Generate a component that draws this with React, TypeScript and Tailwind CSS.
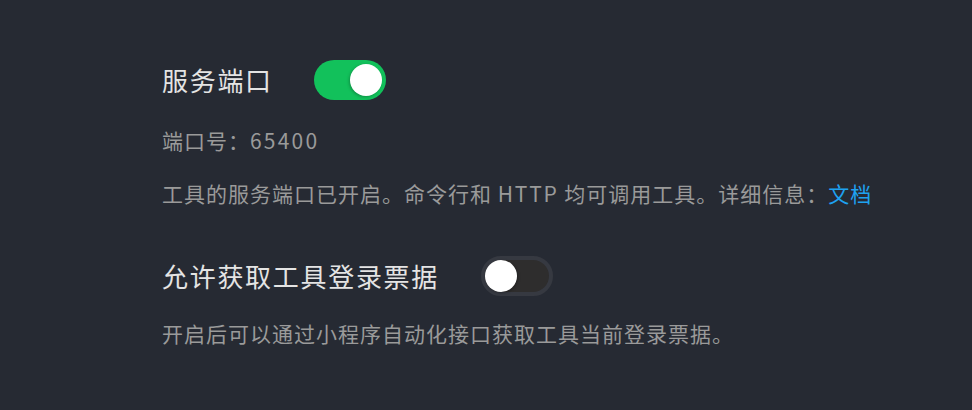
import React from "react";

function Toggle({ on }: { on: boolean }) {
  return on ? (
    <div className="relative ml-[41px] h-[40px] w-[72px] shrink-0 rounded-full bg-[#12c15b]">
      <div className="absolute right-[4px] top-[4px] h-[32px] w-[32px] rounded-full bg-white shadow-[-1px_1px_3px_rgba(0,0,0,0.25)]" />
    </div>
  ) : (
    <div className="relative ml-[42px] h-[40px] w-[72px] shrink-0 rounded-full border-[4px] border-[#363941] bg-[#2e2d2d]">
      <div className="absolute left-0 top-0 h-[32px] w-[32px] rounded-full bg-white shadow-[1px_1px_3px_rgba(0,0,0,0.3)]" />
    </div>
  );
}

export default function App() {
  return (
    <div
      className="h-[410px] w-[972px] bg-[#262a33] pl-[162px] pt-[60px]"
      style={{ fontFamily: '"Noto Sans CJK SC", "Noto Sans", sans-serif' }}
    >
      <div className="flex h-[40px] items-center">
        <span className="text-[26px] leading-[40px] tracking-[1.7px] text-[#e4e4e4]">服务端口</span>
        <Toggle on={true} />
      </div>
      <div className="mt-[26px] text-[21px] leading-[28px] tracking-[1px] text-[#9a9a9a]">
        端口号：<span className="tracking-[2.2px]">65400</span>
      </div>
      <div className="mt-[25px] text-[21px] leading-[28px] tracking-[1px] text-[#9a9a9a]">
        工具的服务端口已开启。命令行和 <span className="tracking-[1.8px]">HTTP</span> 均可调用工具。详细信息：<span className="text-[#1ea2f1]">文档</span>
      </div>
      <div className="mt-[49px] flex h-[40px] items-center">
        <span className="text-[26px] leading-[40px] tracking-[1.7px] text-[#e4e4e4]">允许获取工具登录票据</span>
        <Toggle on={false} />
      </div>
      <div className="mt-[23px] text-[21px] leading-[28px] tracking-[1px] text-[#9a9a9a]">
        开启后可以通过小程序自动化接口获取工具当前登录票据。
      </div>
    </div>
  );
}
